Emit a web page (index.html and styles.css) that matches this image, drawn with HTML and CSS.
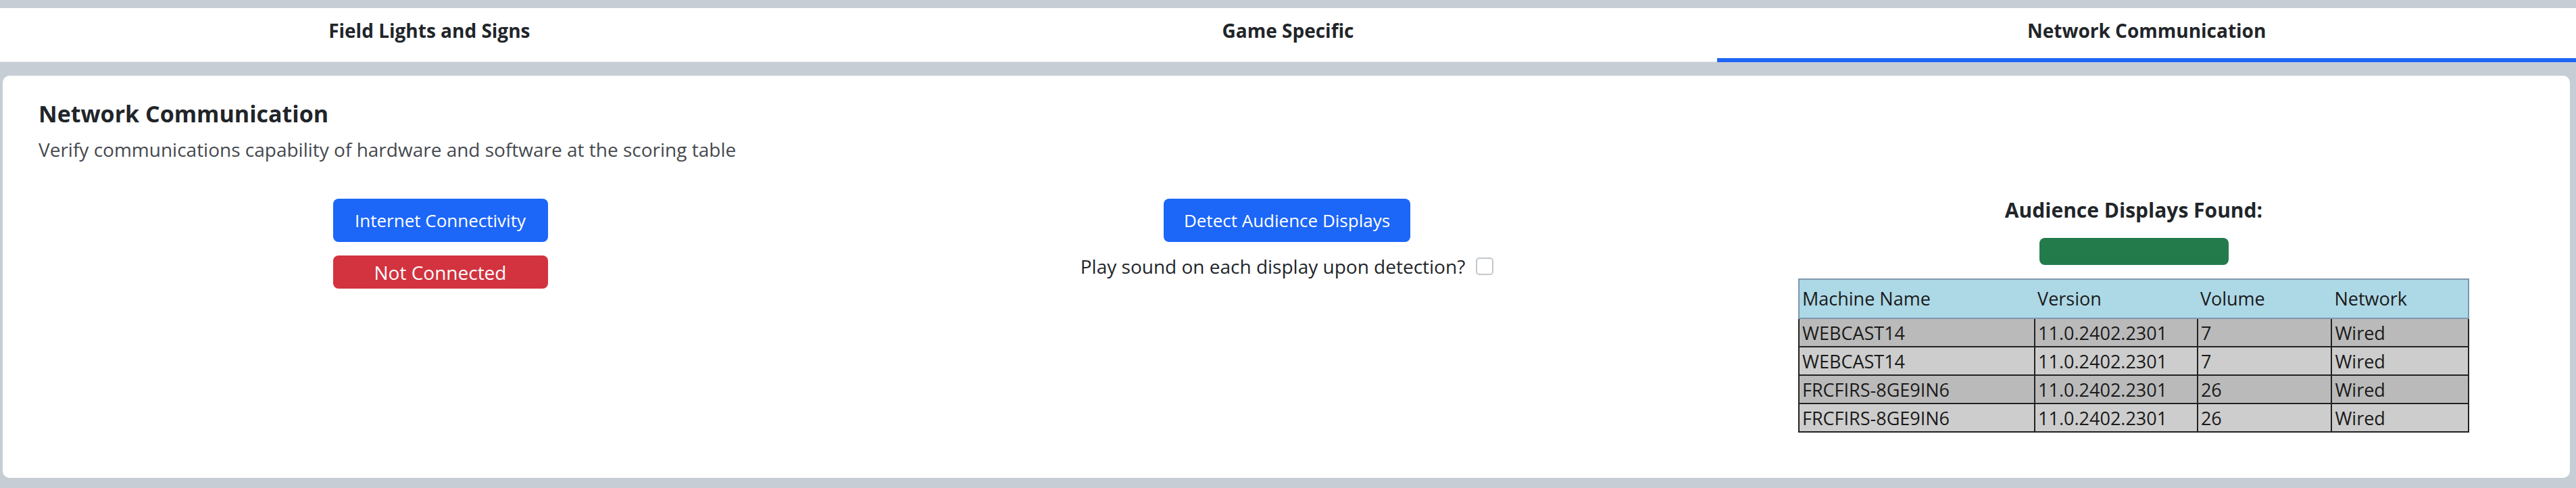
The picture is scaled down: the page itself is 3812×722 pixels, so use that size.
FILE: index.html
```html
<!DOCTYPE html>
<html lang="en">
<head>
<meta charset="utf-8">
<title>Network Communication</title>
<link rel="stylesheet" href="styles.css">
</head>
<body>
<nav class="tabs">
  <div class="tab">Field Lights and Signs</div>
  <div class="tab">Game Specific</div>
  <div class="tab active">Network Communication</div>
</nav>
<main class="card">
  <header class="card-head">
    <h2 class="title">Network Communication</h2>
    <p class="subtitle">Verify communications capability of hardware and software at the scoring table</p>
  </header>
  <div class="cols">
    <section class="col">
      <button class="btn btn-primary">Internet Connectivity</button>
      <div class="status status-bad">Not Connected</div>
    </section>
    <section class="col">
      <button class="btn btn-primary">Detect Audience Displays</button>
      <label class="check">Play sound on each display upon detection? <span class="box"></span></label>
    </section>
    <section class="col">
      <h3 class="found">Audience Displays Found:</h3>
      <div class="found-bar"></div>
      <table class="displays">
        <thead>
          <tr><th class="c1">Machine Name</th><th class="c2">Version</th><th class="c3">Volume</th><th class="c4">Network</th></tr>
        </thead>
        <tbody>
          <tr><td>WEBCAST14</td><td>11.0.2402.2301</td><td>7</td><td>Wired</td></tr>
          <tr><td>WEBCAST14</td><td>11.0.2402.2301</td><td>7</td><td>Wired</td></tr>
          <tr><td>FRCFIRS-8GE9IN6</td><td>11.0.2402.2301</td><td>26</td><td>Wired</td></tr>
          <tr><td>FRCFIRS-8GE9IN6</td><td>11.0.2402.2301</td><td>26</td><td>Wired</td></tr>
        </tbody>
      </table>
    </section>
  </div>
</main>
</body>
</html>
```

FILE: styles.css
```css
* { box-sizing: border-box; }
html, body { height: 100%; }
body {
  margin: 0;
  padding-top: 12px;
  background: #c6cdd5;
  font-family: "Open Sans", "Noto Sans", sans-serif;
  font-size: 28px;
  line-height: 1.5;
  color: #212529;
  display: flex;
  flex-direction: column;
}
.tabs {
  display: grid;
  grid-template-columns: 1fr 1fr 1fr;
  background: #fff;
  height: 80px;
  box-shadow: inset 0 -1px 0 #dfe3e8;
}
.tab {
  display: flex;
  align-items: center;
  justify-content: center;
  padding-bottom: 14px;
  font-weight: 700;
  font-size: 28px;
  color: #212529;
}
.tab.active { box-shadow: inset 0 -6px 0 #1f66f5; }

.card {
  flex: 1;
  margin: 20px 9px 15px 4px;
  background: #fff;
  border-radius: 10px;
  padding: 35px 19px 0 21px;
}
.card-head { padding-left: 32px; }
.title {
  margin: 0 0 11px;
  font-size: 34px;
  line-height: 1.24;
  font-weight: 700;
}
.subtitle {
  margin: 0;
  color: #45494e;
}
.cols {
  display: grid;
  grid-template-columns: 1fr 1fr 1fr;
  margin-top: 48px;
}
.col {
  display: flex;
  flex-direction: column;
  align-items: center;
}
.btn {
  margin-top: 4px;
  font: inherit;
  font-size: 26px;
  border: 0;
  border-radius: 8px;
  height: 64px;
  padding: 0 30px;
  color: #fff;
  background: #1c66f8;
}
.col:first-child .btn { width: 318px; }
.status {
  margin-top: 20px;
  width: 318px;
  height: 49px;
  border-radius: 8px;
  display: flex;
  align-items: center;
  justify-content: center;
  color: #fff;
  font-size: 28px;
}
.status-bad { background: #d2333f; }
.check {
  margin-top: 15px;
  display: flex;
  align-items: center;
  gap: 16px;
}
.box {
  width: 26px;
  height: 26px;
  border: 2px solid #c3c8ce;
  border-radius: 5px;
  background: #fff;
}
.found {
  margin: 0;
  font-size: 30px;
  font-weight: 700;
  line-height: 42px;
}
.found-bar {
  margin-top: 20px;
  width: 280px;
  height: 40px;
  border-radius: 8px;
  background: #237b4c;
}
.displays {
  margin-top: 20px;
  width: 993px;
  border-collapse: collapse;
  border: 2px solid #7e97ae;
  font-size: 27px;
  line-height: 1.5;
  color: #1a1a1a;
}
.displays th {
  background: #add8e6;
  font-weight: 400;
  text-align: left;
  height: 58px;
  padding: 0 4px;
  border-bottom: 2px solid #7e97ae;
}
.displays td {
  height: 42px;
  padding: 0 4px;
  border: 2px solid #222;
  line-height: 1.3;
}
.displays tbody tr:nth-child(odd) td { background: #bababa; }
.displays tbody tr:nth-child(even) td { background: #cdcdcd; }
.c1 { width: 350px; }
.c2 { width: 241px; }
.c3 { width: 199px; }
.c4 { width: 203px; }
```
